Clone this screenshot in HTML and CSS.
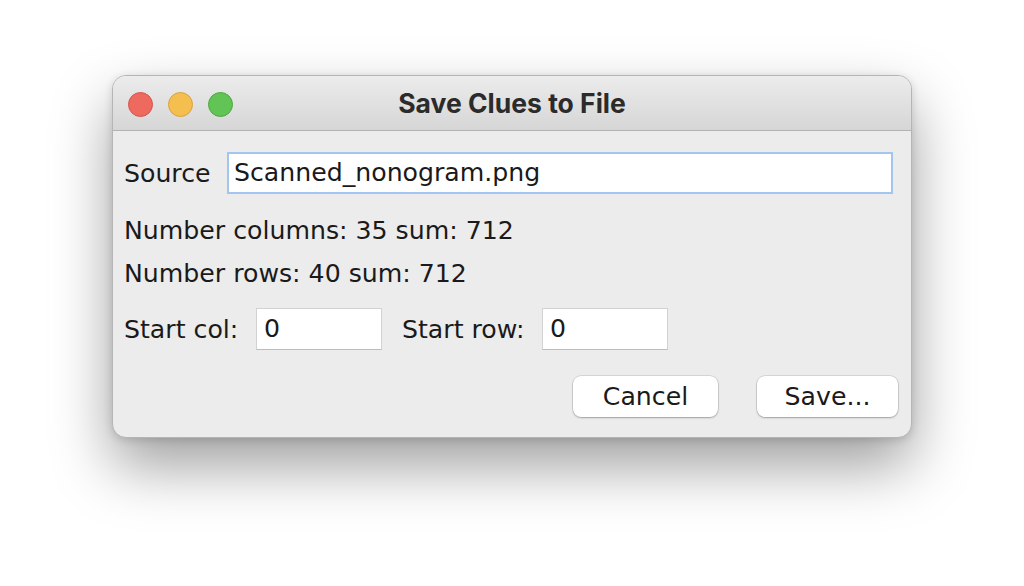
FILE: index.html
```html
<!DOCTYPE html>
<html>
<head>
<meta charset="utf-8">
<link rel="stylesheet" href="styles.css">
</head>
<body>
<div class="stage">
  <div class="window">
    <div class="titlebar">
      <div class="lights">
        <span class="light red"></span>
        <span class="light yellow"></span>
        <span class="light green"></span>
      </div>
      <div class="title">Save Clues to File</div>
    </div>
    <div class="content">
      <div class="source-row">
        <span class="label">Source</span>
        <div class="field focused">Scanned_nonogram.png</div>
      </div>
      <div class="line">Number columns: 35 sum: 712</div>
      <div class="line">Number rows: 40 sum: 712</div>
      <div class="start-row">
        <span class="label first">Start col:</span>
        <div class="field small">0</div>
        <span class="label second">Start row:</span>
        <div class="field small">0</div>
      </div>
      <div class="buttons">
        <button class="btn cancel">Cancel</button>
        <button class="btn save">Save...</button>
      </div>
    </div>
  </div>
</div>
</body>
</html>
```
FILE: styles.css
```css
html, body {
  margin: 0;
  padding: 0;
  background: #ffffff;
}
.stage {
  width: 1024px;
  height: 586px;
  padding: 75px 0 0 112px;
  box-sizing: border-box;
}
.window {
  width: 800px;
  height: 363px;
  box-sizing: border-box;
  background: #ececec;
  border-radius: 14px;
  border: 1px solid #b5b5b5;
  box-shadow: 0 28px 60px rgba(0,0,0,0.38), 0 2px 8px rgba(0,0,0,0.14);
  overflow: hidden;
  font-family: "DejaVu Sans", "Noto Sans", sans-serif;
  color: #1a1a1a;
}
.titlebar {
  height: 54px;
  position: relative;
  display: flex;
  align-items: center;
  justify-content: center;
  background: linear-gradient(#ececec, #d6d6d6);
  border-bottom: 1px solid #b3b3b3;
}
.lights {
  position: absolute;
  left: 15px;
  top: 16px;
  display: flex;
  gap: 15px;
}
.light {
  width: 25px;
  height: 25px;
  border-radius: 50%;
  box-sizing: border-box;
}
.red { background: #ee6a5f; border: 1px solid #d8544b; }
.yellow { background: #f5bf4f; border: 1px solid #d9a23a; }
.green { background: #61c454; border: 1px solid #4ea83f; }
.title {
  font-family: "Inter", "Liberation Sans", sans-serif;
  font-weight: 700;
  font-size: 26.5px;
  color: #2b2b2b;
}
.content {
  padding: 21px 18px 0 11px;
  font-size: 25.2px;
}
.source-row {
  display: flex;
  align-items: center;
  height: 42px;
}
.label {
  white-space: nowrap;
}
.source-row .label {
  width: 103px;
}
.field {
  height: 42px;
  box-sizing: border-box;
  background: #ffffff;
  border: 1px solid #d2d2d2;
  border-bottom-color: #bdbdbd;
  padding: 0 7px;
  line-height: 40px;
  font-size: 25.2px;
}
.field.focused {
  flex: 1;
  border: 2px solid #a3c6f1;
  line-height: 38px;
  padding: 0 5px;
}
.line {
  height: 43px;
  line-height: 43px;
  margin-top: 15px;
}
.line + .line {
  margin-top: 0;
}
.start-row {
  margin-top: 13px;
  display: flex;
  align-items: center;
  height: 42px;
}
.start-row .label.first {
  width: 132px;
}
.start-row .label.second {
  margin-left: 20px;
  width: 140px;
}
.field.small {
  width: 126px;
}
.buttons {
  margin-top: 26px;
  display: flex;
  justify-content: flex-end;
  gap: 39px;
  margin-right: -5px;
}
.btn {
  height: 41px;
  border: none;
  border-radius: 8px;
  background: #ffffff;
  box-shadow: 0 0 0 0.5px rgba(0,0,0,0.18), 0 1px 2px rgba(0,0,0,0.25);
  font-family: "DejaVu Sans", "Noto Sans", sans-serif;
  font-size: 25.2px;
  color: #1a1a1a;
  padding: 0;
}
.btn.cancel { width: 145px; }
.btn.save { width: 141px; }
```
